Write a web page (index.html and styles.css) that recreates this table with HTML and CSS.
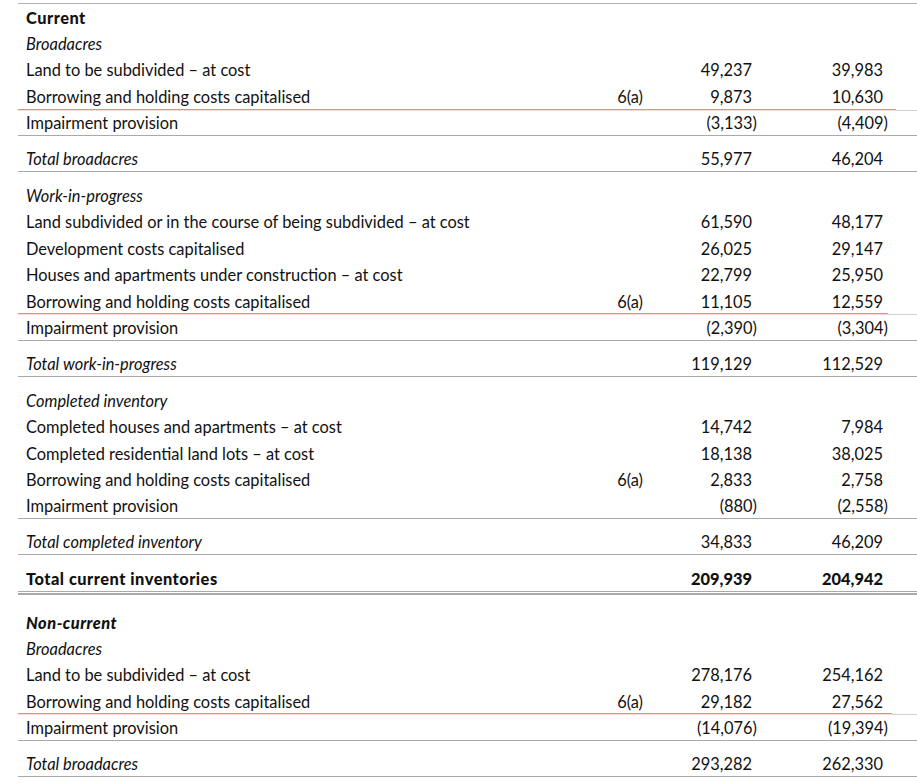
FILE: index.html
```html
<!DOCTYPE html>
<html lang="en">
<head>
<meta charset="utf-8">
<title>Inventories</title>
<link rel="stylesheet" href="styles.css">
</head>
<body>
<div class="sheet">
  <div class="group first">
    <div class="row"><span class="label bold">Current</span></div>
    <div class="row"><span class="label it">Broadacres</span></div>
    <div class="row"><span class="label">Land to be subdivided – at cost</span><span class="note"></span><span class="num">49,237</span><span class="num">39,983</span></div>
    <div class="row marked"><span class="label">Borrowing and holding costs capitalised</span><span class="note">6(a)</span><span class="num">9,873</span><span class="num">10,630</span></div>
    <div class="row end"><span class="label">Impairment provision</span><span class="note"></span><span class="num neg">(3,133)</span><span class="num neg">(4,409)</span></div>
  </div>
  <div class="row total"><span class="label it">Total broadacres</span><span class="note"></span><span class="num">55,977</span><span class="num">46,204</span></div>

  <div class="group">
    <div class="row"><span class="label it">Work-in-progress</span></div>
    <div class="row"><span class="label">Land subdivided or in the course of being subdivided – at cost</span><span class="note"></span><span class="num">61,590</span><span class="num">48,177</span></div>
    <div class="row"><span class="label">Development costs capitalised</span><span class="note"></span><span class="num">26,025</span><span class="num">29,147</span></div>
    <div class="row"><span class="label">Houses and apartments under construction – at cost</span><span class="note"></span><span class="num">22,799</span><span class="num">25,950</span></div>
    <div class="row marked short"><span class="label">Borrowing and holding costs capitalised</span><span class="note">6(a)</span><span class="num">11,105</span><span class="num">12,559</span></div>
    <div class="row end"><span class="label">Impairment provision</span><span class="note"></span><span class="num neg">(2,390)</span><span class="num neg">(3,304)</span></div>
  </div>
  <div class="row total"><span class="label it">Total work-in-progress</span><span class="note"></span><span class="num">119,129</span><span class="num">112,529</span></div>

  <div class="group">
    <div class="row"><span class="label it">Completed inventory</span></div>
    <div class="row"><span class="label">Completed houses and apartments – at cost</span><span class="note"></span><span class="num">14,742</span><span class="num">7,984</span></div>
    <div class="row"><span class="label">Completed residential land lots – at cost</span><span class="note"></span><span class="num">18,138</span><span class="num">38,025</span></div>
    <div class="row"><span class="label">Borrowing and holding costs capitalised</span><span class="note">6(a)</span><span class="num">2,833</span><span class="num">2,758</span></div>
    <div class="row end"><span class="label">Impairment provision</span><span class="note"></span><span class="num neg">(880)</span><span class="num neg">(2,558)</span></div>
  </div>
  <div class="row total"><span class="label it">Total completed inventory</span><span class="note"></span><span class="num">34,833</span><span class="num">46,209</span></div>
  <div class="row total grand"><span class="label bold">Total current inventories</span><span class="note"></span><span class="num bold">209,939</span><span class="num bold">204,942</span></div>

  <div class="group noncurrent">
    <div class="row"><span class="label bold it">Non-current</span></div>
    <div class="row"><span class="label it">Broadacres</span></div>
    <div class="row"><span class="label">Land to be subdivided – at cost</span><span class="note"></span><span class="num">278,176</span><span class="num">254,162</span></div>
    <div class="row marked mid"><span class="label">Borrowing and holding costs capitalised</span><span class="note">6(a)</span><span class="num">29,182</span><span class="num">27,562</span></div>
    <div class="row end"><span class="label">Impairment provision</span><span class="note"></span><span class="num neg">(14,076)</span><span class="num neg">(19,394)</span></div>
  </div>
  <div class="row total"><span class="label it">Total broadacres</span><span class="note"></span><span class="num">293,282</span><span class="num">262,330</span></div>
</div>
</body>
</html>
```
FILE: styles.css
```css
html, body {
  margin: 0;
  padding: 0;
  background: #ffffff;
  overflow: hidden;
}

body {
  font-family: "Lato", "Liberation Sans", sans-serif;
  font-size: 16.4px;
  color: #111111;
}

.sheet {
  margin: 3px 0 0 18px;
  border-top: 1px solid #b4b4b4;
}

.group {
  margin-top: 10px;
}

.group.first {
  margin-top: 0;
}

.group.noncurrent {
  margin-top: 17px;
}

.row {
  display: grid;
  grid-template-columns: 571px 78px 130px 120px;
  height: 26.4px;
  align-items: center;
  position: relative;
  box-sizing: border-box;
}

.label {
  padding-left: 8px;
  white-space: nowrap;
}

.note {
  text-align: right;
  padding-right: 24px;
}

.num {
  text-align: right;
  padding-right: 45px;
}

.num:last-child {
  padding-right: 34px;
}

.num.neg {
  padding-right: 40px;
}

.num.neg:last-child {
  padding-right: 29px;
}

.bold {
  font-weight: 900;
}

.label.bold {
  letter-spacing: 0.5px;
}

.it {
  font-style: italic;
}

.marked::after {
  content: "";
  position: absolute;
  z-index: 1;
  left: 0;
  right: 21px;
  bottom: 0;
  height: 1px;
  background: #f08a8a;
  box-shadow: 0 1px 0 #fcd6d6;
}

.marked.short::after {
  right: 29px;
}

.marked.mid::after {
  right: 25px;
}

.marked + .row {
  border-top: 1px solid #d2d2d2;
}

.end {
  border-bottom: 1px solid #a9a9a9;
}

.total {
  margin-top: 10px;
  border-bottom: 1px solid #a9a9a9;
}

.total.grand {
  box-shadow: 0 1px 0 #ffffff, 0 3px 0 #a9a9a9;
}
```
